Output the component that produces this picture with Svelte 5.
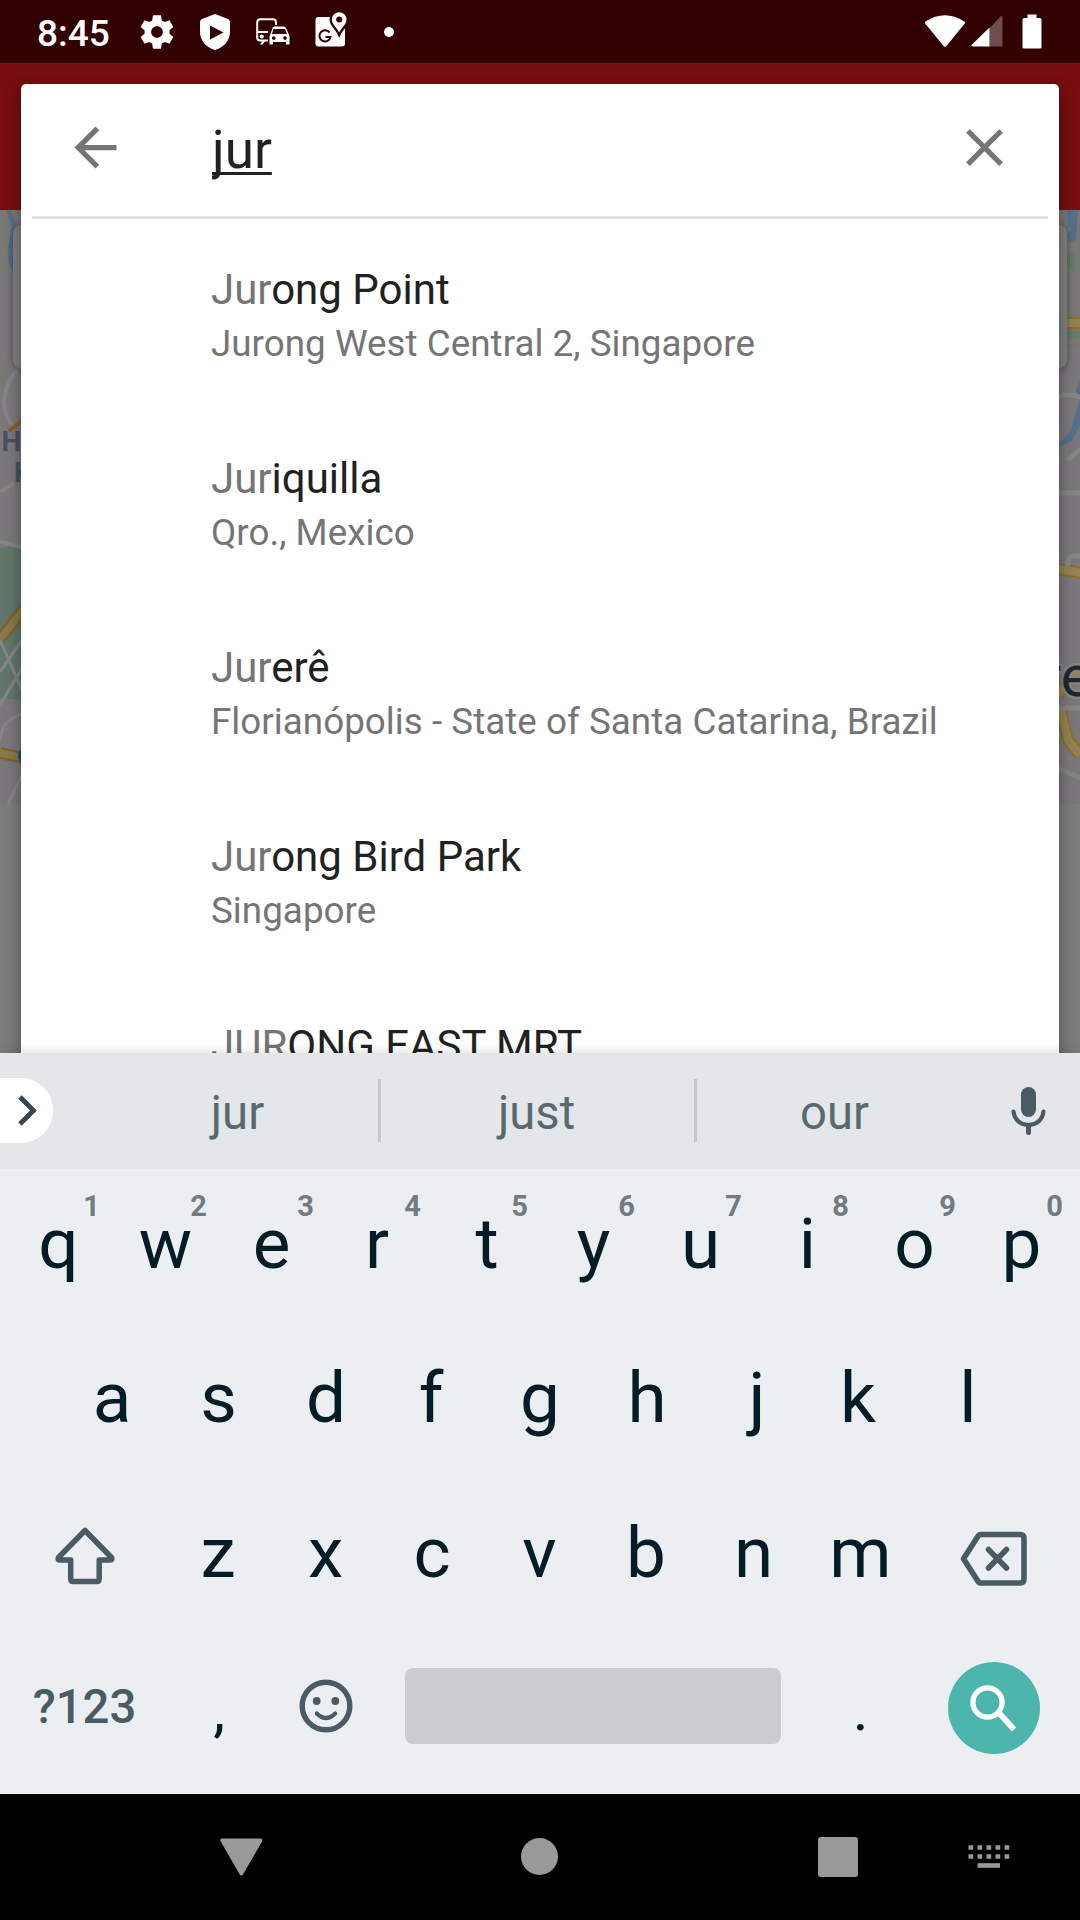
<script>
  const places = [
    { match: 'Jur', rest: 'ong Point', detail: 'Jurong West Central 2, Singapore' },
    { match: 'Jur', rest: 'iquilla', detail: 'Qro., Mexico' },
    { match: 'Jur', rest: 'erê', detail: 'Florianópolis - State of Santa Catarina, Brazil' },
    { match: 'Jur', rest: 'ong Bird Park', detail: 'Singapore' },
    { match: 'JUR', rest: 'ONG EAST MRT', detail: 'Singapore' }
  ];
  const topRow = [...'qwertyuiop'].map((letter, i) => ({ letter, hint: (i + 1) % 10 }));
  const middleRow = [...'asdfghjkl'];
  const bottomRow = [...'zxcvbnm'];

  // Optical centring: letters whose ink sits off the middle of their advance width.
  const nudges = { e: -1, r: -2.5, t: 0.5, s: -0.5, f: -2, j: 3, k: -3, z: -1, x: -0.5, c: -1, v: -0.5, b: -1, n: -0.5, m: -0.5 };
  const nudge = (letter) => `${nudges[letter] ?? 0}px`;
</script>

<div class="screen">
  <div class="app">
    <div class="status">
      <span class="clock">8:45</span>
      <div class="cell">
        <svg width="40" height="40" viewBox="0 0 24 24"><path fill="#fff" d="M19.43 12.98c.04-.32.07-.64.07-.98s-.03-.66-.07-.98l2.11-1.65c.19-.15.24-.42.12-.64l-2-3.46c-.12-.22-.39-.3-.61-.22l-2.49 1c-.52-.4-1.08-.73-1.69-.98l-.38-2.65C14.46 2.18 14.25 2 14 2h-4c-.25 0-.46.18-.49.42l-.38 2.65c-.61.25-1.17.59-1.69.98l-2.49-1c-.23-.09-.49 0-.61.22l-2 3.46c-.13.22-.07.49.12.64l2.11 1.65c-.04.32-.07.65-.07.98s.03.66.07.98l-2.11 1.65c-.19.15-.24.42-.12.64l2 3.46c.12.22.39.3.61.22l2.49-1c.52.4 1.08.73 1.69.98l.38 2.65c.03.24.24.42.49.42h4c.25 0 .46-.18.49-.42l.38-2.65c.61-.25 1.17-.59 1.69-.98l2.49 1c.23.09.49 0 .61-.22l2-3.46c.12-.22.07-.49-.12-.64l-2.11-1.65zM12 15.5c-1.93 0-3.5-1.57-3.5-3.5s1.57-3.5 3.5-3.5 3.500 1.570 3.500 3.500-1.570 3.500-3.500 3.500z"/></svg>
      </div>
      <div class="cell">
        <svg width="30" height="36" viewBox="0 0 30 36"><path fill="#fff" fill-rule="evenodd" d="M15 0 28 5Q30 6 30 8V18C30 27 23 34 15 36 7 34 0 27 0 18V8Q0 6 2 5ZM10 11.500V25.500L23.500 18.500Z"/></svg>
      </div>
      <div class="cell">
        <svg width="34" height="28" viewBox="0 0 34 28">
          <path fill="none" stroke="#fff" stroke-width="2" d="M12 22.500H4Q1.200 22.500 1.200 19.500V4.500Q1.200 1.200 4.500 1.200H17Q20 1.200 20 4.500V7M1.500 14H12"/>
          <path fill="#fff" d="M4 26.500 7 22H10L6.500 26.500Z"/>
          <circle cx="5.800" cy="18.500" r="2" fill="#fff"/>
          <path fill="#fff" fill-rule="evenodd" d="M14 17.500 16.500 10Q17 8.500 18.500 8.500H28Q29.500 8.500 30 10L33.500 18V26.500H30V24H17V26.500H13.500V18ZM17.500 11 15.800 16H31L29 11ZM17.800 18.200a1.800 1.800 0 1 0 .01 0ZM29 18.200a1.800 1.800 0 1 0 .01 0Z"/>
        </svg>
      </div>
      <div class="cell">
        <svg class="maps" width="32" height="35" viewBox="0 0 32 35">
          <rect x="0.500" y="5" width="29.500" height="29.500" rx="3" fill="#fff"/>
          <path fill="#330000" d="M24.200-2.500A10 10 0 0 0 14.500 7.500C14.500 14 20.500 16 24.200 26 28 16 34 14 34 7.500A10 10 0 0 0 24.200-2.500Z"/>
          <path fill="#fff" d="M24.200.2A7.300 7.300 0 0 0 16.900 7.500C16.900 12.500 21.300 14.800 24.200 20.500 27.200 14.800 31.500 12.500 31.500 7.500A7.300 7.300 0 0 0 24.200.2Z"/>
          <circle cx="24.200" cy="7.500" r="3" fill="#330000"/>
          <path fill="none" stroke="#330000" stroke-width="2" d="M14.500 20.500A5.600 5.600 0 1 0 15.500 25H10.500"/>
        </svg>
      </div>
      <div class="cell"><span class="more"></span></div>
      <div class="signals">
        <svg width="42" height="33" viewBox="0 0 42 33"><path fill="#fff" d="M1.200 8.500Q.4 7.400 1.600 6.500 20.800-5.800 40.400 6.500 41.500 7.400 40.700 8.500L22.500 31Q21 32.600 19.500 31Z"/></svg>
        <svg width="42" height="32" viewBox="0 0 42 32"><path fill="#fff" fill-opacity=".3" d="M23.500 13.500 34.500 1.500Q36.500 0 36.500 2V31.500H23.500Z"/><path fill="#fff" d="M23.500 12.500V31.500H7Q4.500 31.300 6 29.500Z"/></svg>
        <svg class="battery" width="20" height="35" viewBox="0 0 20 35"><path fill="#fff" d="M5.500.5H14.500V4H18Q19.500 4 19.500 5.500V33Q19.500 34.500 18 34.500H2Q.5 34.500 .5 33V5.500Q.5 4 2 4H5.500Z"/></svg>
      </div>
    </div>
    <div class="toolbar"></div>
    <svg class="map" width="1080" height="594" viewBox="0 210 1080 594">
      <rect y="210" width="1080" height="594" fill="#7b787b"/>
      <path d="M0 210H24V272H0ZM0 355 12 366 3 385 0 386Z" fill="#7a7874"/>
      <path d="M8 208 14 226 10 250 11 262 16 275" fill="none" stroke="#54708a" stroke-width="4.500"/>
      <path d="M0 548 21 544V700L0 698Z" fill="#62766a"/>
      <path d="M18 368Q5 385 4 400T15 428M0 492 14 483M0 542 22 547" fill="none" stroke="#858585" stroke-width="4"/>
      <path d="M0 640 22 690M0 672 22 640M0 705 22 668" fill="none" stroke="#858585" stroke-width="3"/>
      <path d="M9 431 24 419" fill="none" stroke="#806329" stroke-width="4"/>
      <path d="M0 639 24 609M0 753 24 758" fill="none" stroke="#806329" stroke-width="12"/>
      <path d="M0 639 24 609M0 753 24 758" fill="none" stroke="#877a4b" stroke-width="7"/>
      <path d="M22 714Q2 720 0 740M22 775 8 804" fill="none" stroke="#858585" stroke-width="3"/>
      <circle cx="28" cy="756" r="10" fill="#17479a"/>
      <g class="district"><text x="-18" y="451">C</text><text x="1.500" y="451">H</text><text x="14" y="482">K</text></g>

      <path d="M1056 210H1080V345L1056 350Z" fill="#797774"/>
      <path d="M1067 210H1078L1076 240 1070 242 1066 234 1072 230 1068 226ZM1080 380 1076 390 1079 402 1071 430 1056 448 1072 441 1080 425Z" fill="#54708a"/>
      <path d="M1067 254 1075 250V272L1067 266ZM1060 331H1080V338L1060 340Z" fill="#657c6b"/>
      <path d="M1060 323H1080M1058 569 1082 573M1058 695 1082 665M1060 706 1068 740 1080 755" fill="none" stroke="#8d6e2c" stroke-width="12"/>
      <path d="M1060 323H1080M1058 569 1082 573M1058 695 1082 665M1060 706 1068 740 1080 755" fill="none" stroke="#928452" stroke-width="8"/>
      <path d="M1058 397Q1070 392 1081 398M1058 493H1080M1068 460 1080 449M1067 567Q1068 556 1073 556H1080M1058 708H1080M1058 768 1080 778" fill="none" stroke="#858585" stroke-width="5"/>
      <rect class="panel" x="13" y="224.500" width="1054" height="144.500" rx="9" fill="#808080"/>
      <text x="1042" y="696" class="city">re</text>
    </svg>

    <div class="dialog">
      <div class="search">
        <svg class="icon" width="63" height="63" viewBox="0 0 24 24"><path fill="#757575" d="M20 11H7.830l5.590-5.590L12 4l-8 8 8 8 1.410-1.410L7.830 13H20v-2z"/></svg>
        <span class="query"><u>jur</u></span>
        <svg class="icon" width="63" height="63" viewBox="0 0 24 24"><path fill="#757575" d="M19 6.410L17.590 5 12 10.590 6.410 5 5 6.410 10.590 12 5 17.590 6.410 19 12 13.410 17.590 19 19 17.590 13.410 12z"/></svg>
      </div>
      <ul class="results">
        {#each places as place}
          <li>
            <div class="name"><span class="match">{place.match}</span>{place.rest}</div>
            <div class="detail">{place.detail}</div>
          </li>
        {/each}
      </ul>
    </div>
  </div>

  <div class="keyboard">
    <div class="strip">
      <div class="chip"><svg width="19" height="31" viewBox="0 0 19 31"><path fill="none" stroke="#37474f" stroke-width="4.800" d="M2 2 15.500 15.500 2 29"/></svg></div>
      <span class="word first">jur</span>
      <span class="word middle">just</span>
      <span class="word last">our</span>
      <svg class="mic" width="35" height="48" viewBox="0 0 35 48"><rect x="10" width="15" height="30" rx="7.500" fill="#4b5b63"/><path fill="none" stroke="#4b5b63" stroke-width="4.200" stroke-linecap="round" d="M2.500 24.500C3.500 33 9.500 38 17.500 38S31.500 33 32.500 24.500"/><path stroke="#4b5b63" stroke-width="5" stroke-linecap="round" d="M17.500 39V45.500"/></svg>
    </div>
    <div class="row">
      {#each topRow as key}
        <div class="key"><span class="letter" style:--nudge={nudge(key.letter)}>{key.letter}</span><span class="hint">{key.hint}</span></div>
      {/each}
    </div>
    <div class="row">
      {#each middleRow as letter}<div class="key"><span class="letter" style:--nudge={nudge(letter)}>{letter}</span></div>{/each}
    </div>
    <div class="row">
      <div class="key wide">
        <svg class="shift" width="60" height="58" viewBox="0 0 60 58"><path fill="none" stroke="#4b5b63" stroke-width="5.500" stroke-linejoin="round" d="M30 3.500 56.500 30.500Q57.500 33 55.500 33H44.200V51.500Q44.200 54.500 42 54.500H18Q15.700 54.500 15.700 51.500V33H4.500Q2.500 33 3.500 30.500Z"/></svg>
      </div>
      {#each bottomRow as letter}<div class="key"><span class="letter" style:--nudge={nudge(letter)}>{letter}</span></div>{/each}
      <div class="key wide">
        <svg class="erase" width="68" height="56" viewBox="0 0 68 56"><path fill="none" stroke="#4b5b63" stroke-width="5.600" stroke-linejoin="round" d="M21 3.500H60Q64 3.500 64 7.500V48Q64 52 60 52H21Q19 52 17.800 50L3.500 27.700 17.800 5.500Q19 3.500 21 3.500Z"/><path stroke="#4b5b63" stroke-width="5.500" stroke-linecap="round" d="M28.500 18.500 46.500 37M46.500 18.500 28.500 37"/></svg>
      </div>
    </div>
    <div class="row">
      <div class="key wide symbols">?123</div>
      <div class="key mark">,</div>
      <div class="key">
        <svg class="smile" width="54" height="54" viewBox="0 0 54 54"><circle cx="27" cy="27" r="23.800" fill="none" stroke="#4b5b63" stroke-width="5.400"/><circle cx="17.700" cy="22" r="3.900" fill="#4b5b63"/><circle cx="36.300" cy="22" r="3.900" fill="#4b5b63"/><path fill="none" stroke="#4b5b63" stroke-width="4.200" stroke-linecap="round" d="M17.800 34.500Q27 43.500 36.200 34.500"/></svg>
      </div>
      <div class="spacebar"></div>
      <div class="key mark">.</div>
      <div class="key wide enter">
        <div class="go"><svg width="47" height="47" viewBox="0 0 47 47"><circle cx="17.500" cy="17.500" r="14.600" fill="none" stroke="#fff" stroke-width="5.200"/><path stroke="#fff" stroke-width="5.800" d="M28 28.500 31 30 44 44.500"/></svg></div>
      </div>
    </div>
  </div>

  <div class="nav">
    <svg width="43" height="38" viewBox="0 0 43 38"><path fill="#999" d="M1.500.5H41Q43 1 42 3.500L23 36.500Q21.300 38.500 19.700 36.500L.7 3.500Q-.3 1 1.500.5Z"/></svg>
    <span class="home"></span>
    <span class="recent"></span>
    <svg width="42" height="24" viewBox="0 0 42 24"><path fill="none" stroke="#999" stroke-width="4.600" stroke-dasharray="4.700 4.300" d="M.5 2.500H41.500M.5 11.500H41.500"/><path stroke="#999" stroke-width="4.600" d="M9.500 20.500H32"/></svg>
  </div>
</div>

<style>
  :global(body) { background: #000; }
  .screen {
    width: 1080px;
    height: 1920px;
    display: flex;
    flex-direction: column;
    overflow: hidden;
    font-family: Roboto, sans-serif;
  }
  svg { display: block; flex: none; }

  .app {
    height: 1053px;
    flex: none;
    position: relative;
    overflow: hidden;
    background: #7d7d7d;
  }
  .status {
    height: 63px;
    box-sizing: border-box;
    padding-left: 37px;
    display: flex;
    align-items: center;
    background: #330000;
    color: #fff;
  }
  .clock { width: 91px; padding-top: 4px; font-size: 37px; font-weight: 500; line-height: 60px; }
  .cell { width: 58px; display: flex; justify-content: center; }
  .maps { margin-bottom: 5px; }
  .more { width: 10px; height: 10px; border-radius: 50%; background: #fff; }
  .signals { display: flex; align-items: center; margin: 0 38px 1px auto; }
  .battery { margin-left: 14px; }
  .toolbar { height: 147px; background: #760e12; }
  .district { font: 700 28px Roboto, sans-serif; fill: #495060; }
  .city { font: 400 57px Roboto, sans-serif; fill: #20272c; stroke: #858585; stroke-width: 5px; paint-order: stroke; }
  .panel { filter: drop-shadow(0 1px 3px rgba(0, 0, 0, 0.35)); }

  .dialog {
    position: absolute;
    top: 84px;
    left: 21px;
    right: 21px;
    bottom: -30px;
    border-radius: 5px;
    background: #fff;
    box-shadow: 0 5px 16px rgba(0, 0, 0, 0.4);
  }
  .search {
    height: 132px;
    margin: 0 11px;
    padding: 0 32px;
    display: flex;
    align-items: center;
    border-bottom: 3px solid #e0e0e0;
  }
  .icon { margin-bottom: 5px; }
  .query {
    flex: 1;
    margin-left: 85px;
    padding-bottom: 1px;
    overflow: hidden;
    font-size: 53px;
    line-height: 66px;
    color: #212121;
  }
  .query u { text-decoration-thickness: 3px; text-underline-offset: 4px; text-decoration-skip-ink: none; }
  .results { margin: 0; padding: 0 0 0 190px; list-style: none; }
  .results li { height: 143.300px; padding-top: 45.700px; }
  .name { font-size: 42px; line-height: 50px; color: #212121; white-space: nowrap; }
  .match { color: #757575; }
  .detail { margin-top: 7px; font-size: 36.750px; line-height: 44px; letter-spacing: 0.04px; color: #757575; white-space: nowrap; }

  .keyboard {
    height: 741px;
    flex: none;
    position: relative;
    background: #ebeff2;
    box-shadow: 0 0 12px rgba(0, 0, 0, 0.16);
  }
  .strip {
    height: 116px;
    box-sizing: border-box;
    padding-bottom: 1px;
    display: flex;
    align-items: center;
    background: #e3e7ea;
  }
  .chip {
    width: 53px;
    height: 65px;
    box-sizing: border-box;
    padding-left: 18px;
    display: flex;
    align-items: center;
    border-radius: 0 32px 32px 0;
    background: #fff;
  }
  .word {
    width: 313px;
    height: 63px;
    box-sizing: content-box;
    line-height: 69px;
    border-right: 3px solid #c4c8cb;
    font-size: 47.250px;
    text-align: center;
    color: #5a6970;
  }
  .word.first { width: 281px; margin-left: 44px; }
  .word.middle { width: 311px; padding-right: 2px; }
  .word.last { width: 275px; border: 0; }
  .mic { margin-left: 39px; }

  .row { display: flex; justify-content: center; height: 154.500px; padding: 0 5px; }
  .key {
    width: 107px;
    flex: none;
    position: relative;
    box-sizing: border-box;
    padding-bottom: 6.500px;
    display: flex;
    align-items: center;
    justify-content: center;
    font-size: 71px;
    color: #041c26;
  }
  .key.wide { width: 160.500px; }
  .letter { transform: translateX(var(--nudge)); }
  .hint {
    position: absolute;
    top: 20px;
    right: 12px;
    font-size: 29px;
    line-height: 34px;
    font-weight: 700;
    color: #717b81;
  }
  .key.symbols { font-size: 47.250px; font-weight: 500; color: #4b5b63; padding-right: 2px; }
  .key.mark { font-size: 60px; padding-bottom: 0; }
  .shift { margin: 7px 0 0; }
  .erase { margin: 14px 2px 0 0; }
  .smile { margin: 0 1px 2px 0; }
  .spacebar {
    width: 376px;
    height: 76px;
    margin: 35.500px 26.500px 0 25px;
    border-radius: 8px;
    background: #c9cdd0;
  }
  .key.enter { padding: 0 2px 3.500px 0; }
  .go {
    width: 92px;
    height: 92px;
    display: flex;
    align-items: center;
    justify-content: center;
    border-radius: 50%;
    background: #4db6ac;
  }

  .nav {
    height: 126px;
    flex: none;
    position: relative;
    box-sizing: border-box;
    padding: 0 0 1px 220px;
    display: flex;
    align-items: center;
    background: #000;
  }
  .home { width: 37px; height: 37px; margin: 0 260px 0 258px; border-radius: 50%; background: #999; }
  .recent { width: 40px; height: 40px; margin-right: 110px; border-radius: 3px; background: #999; }
</style>
